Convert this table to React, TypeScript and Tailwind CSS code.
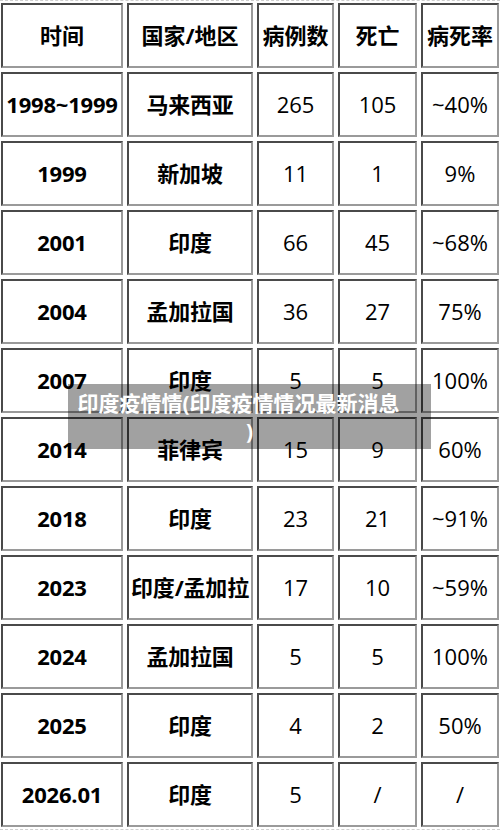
import React from 'react';

const header = ['时间', '国家/地区', '病例数', '死亡', '病死率'];

const rows: string[][] = [
  ['1998~1999', '马来西亚', '265', '105', '~40%'],
  ['1999', '新加坡', '11', '1', '9%'],
  ['2001', '印度', '66', '45', '~68%'],
  ['2004', '孟加拉国', '36', '27', '75%'],
  ['2007', '印度', '5', '5', '100%'],
  ['2014', '菲律宾', '15', '9', '60%'],
  ['2018', '印度', '23', '21', '~91%'],
  ['2023', '印度/孟加拉', '17', '10', '~59%'],
  ['2024', '孟加拉国', '5', '5', '100%'],
  ['2025', '印度', '4', '2', '50%'],
  ['2026.01', '印度', '5', '/', '/'],
];

const cellBase =
  'flex h-[65px] items-center justify-center border-2 border-t-[#4a4a4a] border-l-[#4a4a4a] border-r-[#9a9a9a] border-b-[#9a9a9a] bg-white text-[22px] text-black whitespace-nowrap';

const App: React.FC = () => {
  return (
    <div
      className="relative h-[833px] w-[500px] overflow-hidden bg-white"
      style={{ fontFamily: '"Open Sans", "Noto Sans CJK SC", sans-serif' }}
    >
      <div className="border-t border-dashed border-[#cfcfcf] pt-[2px] pb-[2px] border-b">
        <div className="grid grid-cols-[122px_126px_77px_79px_78px] gap-[4px] pl-px">
          {header.map((h) => (
            <div key={h} className={`${cellBase} font-bold`}>
              {h}
            </div>
          ))}
          {rows.map((row, ri) =>
            row.map((cell, ci) => (
              <div
                key={`${ri}-${ci}`}
                className={`${cellBase} ${ci < 2 ? 'font-bold tracking-[-0.2px]' : 'font-normal'}`}
              >
                {cell}
              </div>
            ))
          )}
        </div>
      </div>

      {/* caption overlay */}
      <div className="absolute left-[68px] top-[384px] flex h-[65px] w-[363px] flex-col items-center justify-center bg-black/[0.37] text-[21px] font-bold leading-[28px] text-white">
        <span className="pr-[22px] whitespace-nowrap">印度疫情情(印度疫情情况最新消息</span>
        <span>)</span>
      </div>
    </div>
  );
};

export default App;
